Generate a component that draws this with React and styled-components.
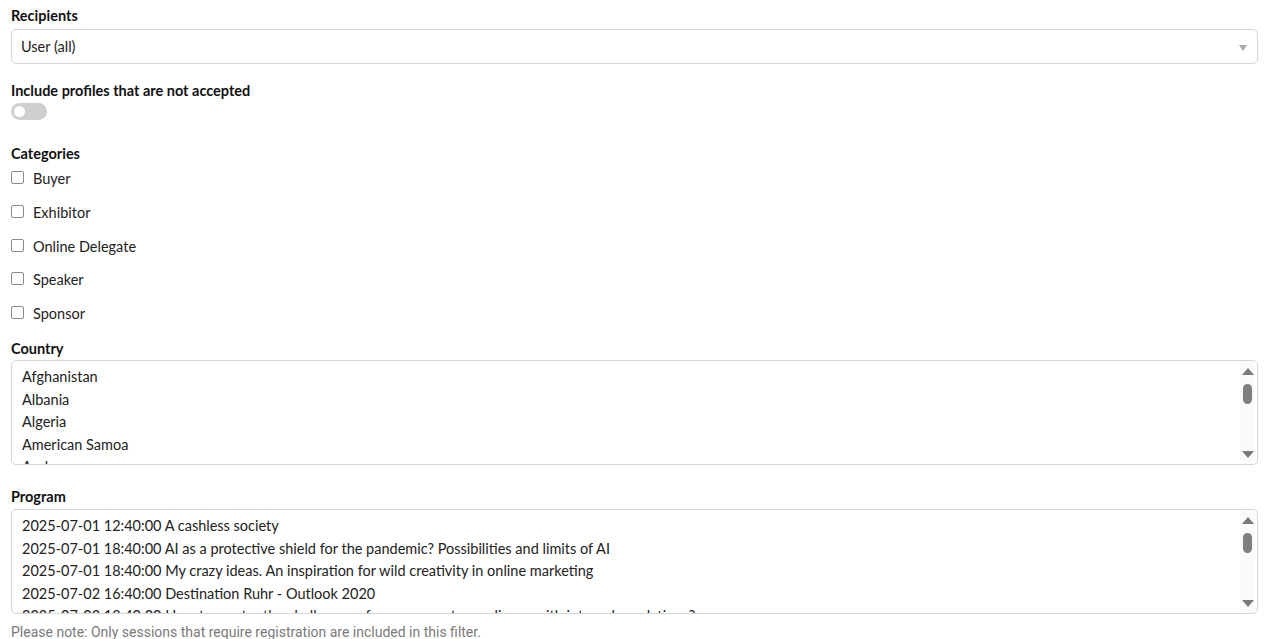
import React from 'react';
import styled, { createGlobalStyle } from 'styled-components';

const Global = createGlobalStyle`
  html, body {
    margin: 0;
    background: #fff;
  }
  body {
    font-family: Lato, "Noto Sans", sans-serif;
    color: #222;
  }
`;

const Page = styled.div`
  padding: 6px 22px 0 11px;
  display: flex;
  flex-direction: column;
`;

const Field = styled.div`
  display: flex;
  flex-direction: column;
  margin-bottom: ${p => p.gap || 0}px;
`;

const Label = styled.div`
  font-size: 14.5px;
  font-weight: 700;
  color: #111;
  line-height: 20px;
  margin-bottom: ${p => p.space}px;
`;

const SelectBox = styled.div`
  height: 33px;
  border: 1px solid #d6d6d6;
  border-radius: 5px;
  background: #fff;
  display: flex;
  align-items: center;
  justify-content: space-between;
  padding: 0 10px 0 9px;
  font-size: 14.5px;
  color: #222;
`;

const Caret = styled.span`
  width: 0;
  height: 0;
  border-left: 4px solid transparent;
  border-right: 4px solid transparent;
  border-top: 6px solid #aaa;
  margin-top: 2px;
`;

const Toggle = styled.div`
  width: 36px;
  height: 17px;
  border-radius: 9px;
  background: #cfcfcf;
  position: relative;
  &::after {
    content: '';
    position: absolute;
    left: 3px;
    top: 3px;
    width: 11px;
    height: 11px;
    border-radius: 50%;
    background: #fff;
  }
`;

const CheckRow = styled.label`
  display: flex;
  align-items: center;
  gap: 9px;
  height: 33.7px;
  font-size: 14.5px;
  color: #222;
`;

const Box = styled.span`
  width: 11px;
  height: 11px;
  border: 1px solid #8a8a8a;
  border-radius: 2px;
  background: #fff;
  margin-top: -2px;
`;

const ListBox = styled.div`
  height: 105px;
  border: 1px solid #d6d6d6;
  border-radius: 5px;
  background: #fff;
  display: flex;
  overflow: hidden;
  box-sizing: border-box;
`;

const ListBody = styled.div`
  flex: 1;
  overflow: hidden;
  padding: 5px 0 0 10px;
`;

const ListItem = styled.div`
  font-size: 14.5px;
  line-height: 22.4px;
  color: #222;
  white-space: nowrap;
`;

const ScrollBar = styled.div`
  width: 15px;
  margin-right: 2px;
  background: #fafafa;
  display: flex;
  flex-direction: column;
  align-items: center;
  padding: 7px 0 6px;
`;

const Arrow = styled.span`
  width: 0;
  height: 0;
  border-left: 6px solid transparent;
  border-right: 6px solid transparent;
  ${p => (p.down ? 'border-top: 7px solid #7a7a7a;' : 'border-bottom: 7px solid #7a7a7a;')}
`;

const Thumb = styled.span`
  width: 9px;
  height: 20px;
  border-radius: 5px;
  background: #7f7f7f;
  margin-top: 9px;
`;

const Spacer = styled.span`
  flex: 1;
`;

const Note = styled.div`
  font-family: Roboto, "Liberation Sans", sans-serif;
  font-size: 14px;
  color: #7a7a7a;
  margin-top: 10px;
`;

const categories = ['Buyer', 'Exhibitor', 'Online Delegate', 'Speaker', 'Sponsor'];

const countries = ['Afghanistan', 'Albania', 'Algeria', 'American Samoa', 'Andorra'];

const sessions = [
  '2025-07-01 12:40:00 A cashless society',
  '2025-07-01 18:40:00 AI as a protective shield for the pandemic? Possibilities and limits of AI',
  '2025-07-01 18:40:00 My crazy ideas. An inspiration for wild creativity in online marketing',
  '2025-07-02 16:40:00 Destination Ruhr - Outlook 2020',
  '2025-07-02 18:40:00 How to master the challenges of procurement compliance with internal regulations?',
];

function List({ items }) {
  return (
    <ListBox>
      <ListBody>
        {items.map(t => <ListItem key={t}>{t}</ListItem>)}
      </ListBody>
      <ScrollBar>
        <Arrow />
        <Thumb />
        <Spacer />
        <Arrow down />
      </ScrollBar>
    </ListBox>
  );
}

export default function App() {
  return (
    <>
      <Global />
      <Page>
        <Field gap={17}>
          <Label space={3}>Recipients</Label>
          <SelectBox>
            <span>User (all)</span>
            <Caret />
          </SelectBox>
        </Field>
        <Field gap={24}>
          <Label space={2}>Include profiles that are not accepted</Label>
          <Toggle />
        </Field>
        <Field gap={9}>
          <Label space={-2}>Categories</Label>
          {categories.map(c => (
            <CheckRow key={c}>
              <Box />
              {c}
            </CheckRow>
          ))}
        </Field>
        <Field gap={22}>
          <Label space={1}>Country</Label>
          <List items={countries} />
        </Field>
        <Field>
          <Label space={2}>Program</Label>
          <List items={sessions} />
          <Note>Please note: Only sessions that require registration are included in this filter.</Note>
        </Field>
      </Page>
    </>
  );
}
